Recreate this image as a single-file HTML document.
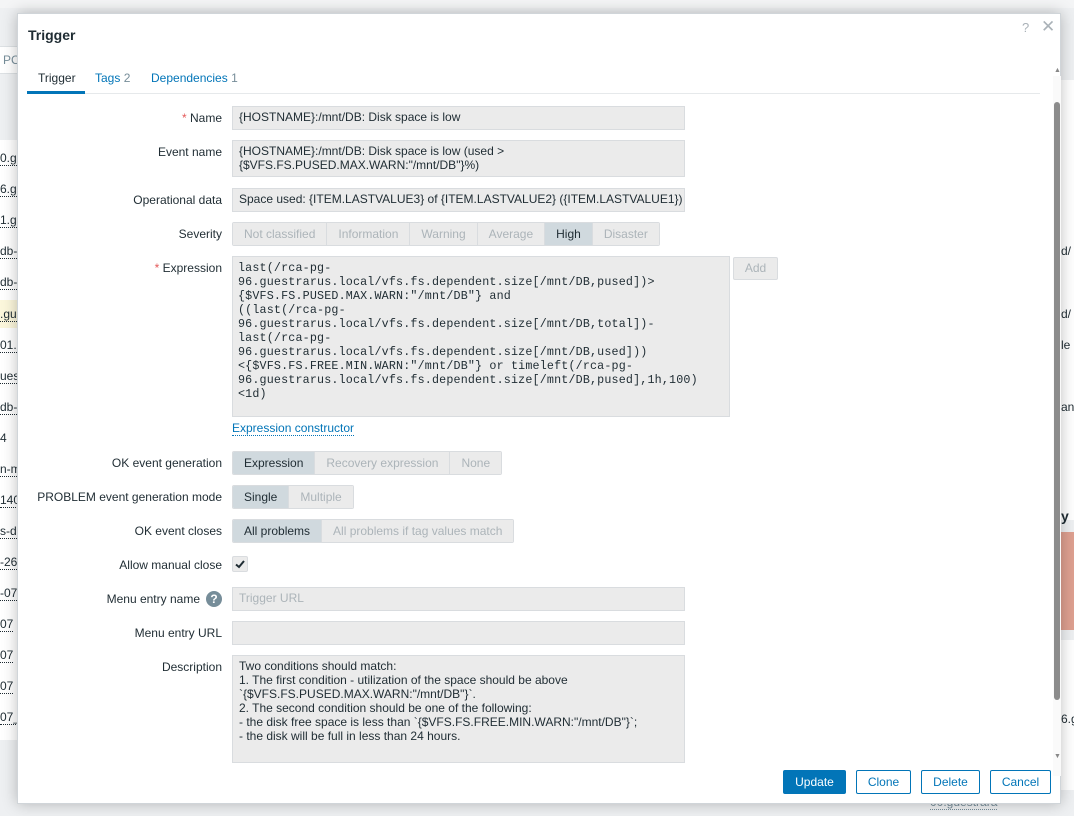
<!DOCTYPE html>
<html><head><meta charset="utf-8">
<style>
*{box-sizing:border-box;margin:0;padding:0}
body{width:1074px;height:816px;background:#eef0f2;font-family:"Liberation Sans",sans-serif;font-size:12px;color:#1f2c33;position:relative;overflow:hidden}
.a{position:absolute}
.lt{position:absolute;left:0;font-size:12px;color:#1f2c33;border-bottom:1px dotted #1f2c33;line-height:13px}
#modal{position:absolute;left:17px;top:13px;width:1044px;height:791px;background:#fff;border:1px solid #d0d5d9;box-shadow:0 0 14px rgba(0,0,0,.25)}
.lbl{position:absolute;right:0;width:200px;text-align:right;font-size:12px;color:#1f2c33}
.in{position:absolute;left:232px;background:#ebebeb;border:1px solid #d9dcdf;font-size:12px;padding:3px 6px;line-height:14px;color:#1f2c33;white-space:pre;overflow:hidden}
.seg{position:absolute;height:24px;display:flex;border:1px solid #d9dcdf;border-radius:2px;overflow:hidden}
.seg span{display:block;height:22px;line-height:22px;padding:0 11px;background:#ebebeb;color:#acb4b9;border-left:1px solid #d9dcdf}
.seg span:first-child{border-left:none}
.seg span.on{background:#d0d9de;color:#1f2c33}
.btn{position:absolute;top:770px;height:24px;border:1px solid #0275b8;border-radius:2px;color:#0275b8;background:#fff;text-align:center;line-height:22px;font-size:12px}
</style></head><body>
<div class="a" style="left:0;top:0;width:1074px;height:8px;background:#f4f5f6"></div>
<div class="a" style="left:0;top:46px;width:17px;height:28px;background:#fff;border-top:1px solid #dde1e4;border-bottom:1px solid #dde1e4"></div>
<div class="a" style="left:3px;top:53px;color:#768d99">PC</div>
<div class="a" style="left:0;top:140px;width:17px;height:600px;background:#fff"></div>
<div class="lt" style="top:152px">0.g</div>
<div class="lt" style="top:183px">6.gu</div>
<div class="lt" style="top:214px">1.g</div>
<div class="lt" style="top:245px">db-(</div>
<div class="lt" style="top:276px">db-(</div>
<div class="a" style="left:0;top:300px;width:17px;height:28px;background:#fcf7dc"></div>
<div class="lt" style="top:308px">.gu</div>
<div class="lt" style="top:339px">01.g</div>
<div class="lt" style="top:370px">ues</div>
<div class="lt" style="top:401px">db-(</div>
<div class="lt" style="top:432px;border:none">4</div>
<div class="lt" style="top:463px">n-m</div>
<div class="lt" style="top:494px">140</div>
<div class="lt" style="top:525px">s-db</div>
<div class="lt" style="top:556px">-26</div>
<div class="lt" style="top:587px">-07</div>
<div class="lt" style="top:618px">07</div>
<div class="lt" style="top:649px">07</div>
<div class="lt" style="top:680px">07</div>
<div class="lt" style="top:711px">07_</div>
<div class="a" style="left:1061px;top:80px;width:13px;height:440px;background:#fff"></div>
<div class="a" style="left:1061px;top:244px;color:#1f2c33">d/</div>
<div class="a" style="left:1061px;top:307px;color:#1f2c33">d/</div>
<div class="a" style="left:1061px;top:338px;color:#1f2c33">le</div>
<div class="a" style="left:1061px;top:400px;color:#1f2c33">an</div>
<div class="a" style="left:1061px;top:508px;font-weight:bold;font-size:14px">y</div>
<div class="a" style="left:1061px;top:532px;width:13px;height:98px;background:#dea090"></div>
<div class="a" style="left:1061px;top:640px;width:13px;height:150px;background:#fff"></div>
<div class="a" style="left:1061px;top:712px">6.g</div>
<div class="a" style="left:930px;top:796px;color:#768d99;border-bottom:1px dotted #768d99;font-size:12px;line-height:13px">00.guestrara</div>

<div id="modal">
<div class="a" style="left:10px;top:13px;font-size:14px;font-weight:bold;color:#1f2c33">Trigger</div>
<div class="a" style="left:1004px;top:6px;color:#aab2b8;font-size:13px">?</div>
<div class="a" style="left:1023px;top:3px;color:#aab2b8;font-size:17px">✕</div>
<div class="a" style="left:9px;top:79px;width:1013px;height:1px;background:#e6e9eb"></div>
<div class="a" style="left:20px;top:57px;color:#1f2c33">Trigger</div>
<div class="a" style="left:9px;top:77px;width:58px;height:3px;background:#0275b8"></div>
<div class="a" style="left:77px;top:57px;color:#0275b8">Tags <span style="color:#768d99">2</span></div>
<div class="a" style="left:133px;top:57px;color:#0275b8">Dependencies <span style="color:#768d99">1</span></div>
<div class="a" style="left:1035px;top:62px;width:8px;height:700px;background:#fafafa"></div>
<div class="a" style="left:1036px;top:88px;width:6px;height:598px;background:#8c8c8c;border-radius:3px"></div>
<div class="a" style="left:1036px;top:53px;font-size:7px;color:#888">▲</div>
<div class="a" style="left:1036px;top:739px;font-size:7px;color:#888">▼</div>

<div style="position:absolute;left:-18px;top:-14px;width:1044px;height:791px">
<div class="lbl" style="top:111px;left:22px;width:200px"><span style="color:#e45959">*</span> Name</div>
<div class="in" style="top:106px;width:453px;height:24px">{HOSTNAME}:/mnt/DB: Disk space is low</div>
<div class="lbl" style="top:145px;left:22px">Event name</div>
<div class="in" style="top:140px;width:453px;height:37px;line-height:14px">{HOSTNAME}:/mnt/DB: Disk space is low (used &gt;
{$VFS.FS.PUSED.MAX.WARN:"/mnt/DB"}%)</div>
<div class="lbl" style="top:193px;left:22px">Operational data</div>
<div class="in" style="top:188px;width:453px;height:24px">Space used: {ITEM.LASTVALUE3} of {ITEM.LASTVALUE2} ({ITEM.LASTVALUE1})</div>
<div class="lbl" style="top:227px;left:22px">Severity</div>
<div class="seg" style="left:232px;top:222px"><span>Not classified</span><span>Information</span><span>Warning</span><span>Average</span><span class="on">High</span><span>Disaster</span></div>
<div class="lbl" style="top:261px;left:22px"><span style="color:#e45959">*</span> Expression</div>
<div class="in" style="top:256px;width:498px;height:161px;font-family:'Liberation Mono',monospace;font-size:11.7px;letter-spacing:0.17px;line-height:14px;padding:4px 5px">last(/rca-pg-
96.guestrarus.local/vfs.fs.dependent.size[/mnt/DB,pused])&gt;
{$VFS.FS.PUSED.MAX.WARN:"/mnt/DB"} and
((last(/rca-pg-
96.guestrarus.local/vfs.fs.dependent.size[/mnt/DB,total])-
last(/rca-pg-
96.guestrarus.local/vfs.fs.dependent.size[/mnt/DB,used]))
&lt;{$VFS.FS.FREE.MIN.WARN:"/mnt/DB"} or timeleft(/rca-pg-
96.guestrarus.local/vfs.fs.dependent.size[/mnt/DB,pused],1h,100)
&lt;1d)</div>
<div class="a" style="left:733px;top:257px;width:45px;height:23px;background:#ebebeb;border:1px solid #d9dcdf;border-radius:2px;color:#acb4b9;text-align:center;line-height:21px">Add</div>
<div class="a" style="left:232px;top:421px;color:#0275b8;border-bottom:1px dotted #0275b8;line-height:14px">Expression constructor</div>
<div class="lbl" style="top:456px;left:22px">OK event generation</div>
<div class="seg" style="left:232px;top:451px"><span class="on">Expression</span><span>Recovery expression</span><span>None</span></div>
<div class="lbl" style="top:490px;width:300px;left:-78px">PROBLEM event generation mode</div>
<div class="seg" style="left:232px;top:485px"><span class="on">Single</span><span>Multiple</span></div>
<div class="lbl" style="top:524px;left:22px">OK event closes</div>
<div class="seg" style="left:232px;top:519px"><span class="on">All problems</span><span>All problems if tag values match</span></div>
<div class="lbl" style="top:558px;left:22px">Allow manual close</div>
<div class="a" style="left:232px;top:556px;width:16px;height:16px;background:#ebebeb;border:1px solid #d9dcdf;border-radius:2px"><svg width="14" height="14" viewBox="0 0 14 14"><path d="M3 7.5 L6 10 L11 4" fill="none" stroke="#1f2c33" stroke-width="2"/></svg></div>
<div class="lbl" style="top:592px;left:0px">Menu entry name</div>
<div class="a" style="left:206px;top:591px;width:16px;height:16px;border-radius:50%;background:#768d99;color:#fff;font-weight:bold;text-align:center;line-height:16px;font-size:12px">?</div>
<div class="in" style="top:587px;width:453px;height:24px;color:#acb4b9">Trigger URL</div>
<div class="lbl" style="top:626px;left:22px">Menu entry URL</div>
<div class="in" style="top:621px;width:453px;height:24px"></div>
<div class="lbl" style="top:660px;left:22px">Description</div>
<div class="in" style="top:655px;width:453px;height:108px;padding:3px 6px">Two conditions should match:
1. The first condition - utilization of the space should be above
`{$VFS.FS.PUSED.MAX.WARN:"/mnt/DB"}`.
2. The second condition should be one of the following:
- the disk free space is less than `{$VFS.FS.FREE.MIN.WARN:"/mnt/DB"}`;
- the disk will be full in less than 24 hours.</div>
<div class="btn" style="left:783px;width:63px;background:#0275b8;color:#fff">Update</div>
<div class="btn" style="left:856px;width:55px">Clone</div>
<div class="btn" style="left:921px;width:59px">Delete</div>
<div class="btn" style="left:990px;width:61px">Cancel</div>
</div>
</div>
</body></html>
